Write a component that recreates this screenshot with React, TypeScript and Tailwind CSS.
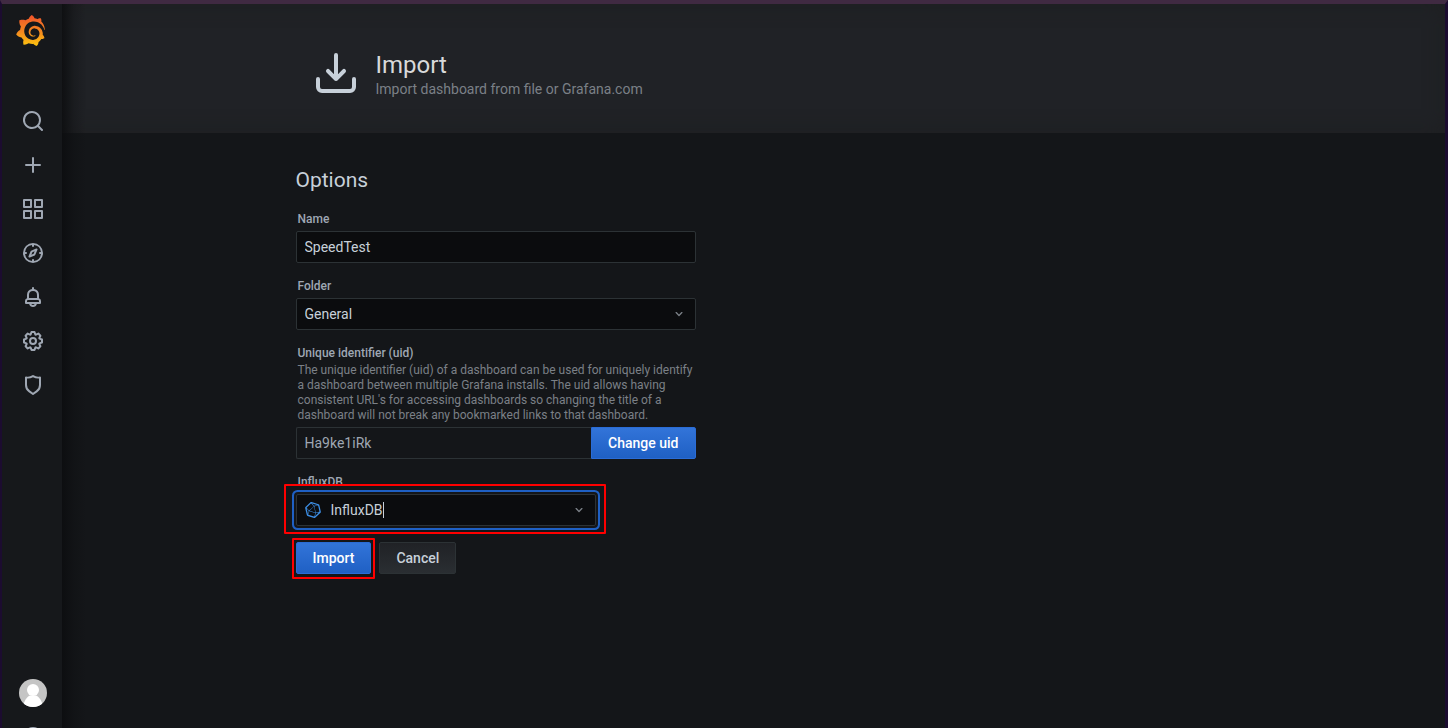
import React from "react";
import { SiGrafana, SiInfluxdb } from "react-icons/si";

const ICONS = {
  search:
    "M21.71,20.29,18,16.61A9,9,0,1,0,16.61,18l3.68,3.68a1,1,0,0,0,1.42,0A1,1,0,0,0,21.71,20.29ZM11,18a7,7,0,1,1,7-7A7,7,0,0,1,11,18Z",
  plus: "M19,11H13V5a1,1,0,0,0-2,0v6H5a1,1,0,0,0,0,2h6v6a1,1,0,0,0,2,0V13h6a1,1,0,0,0,0-2Z",
  apps: "M10,13H3a1,1,0,0,0-1,1v7a1,1,0,0,0,1,1h7a1,1,0,0,0,1-1V14A1,1,0,0,0,10,13ZM9,20H4V15H9ZM21,2H14a1,1,0,0,0-1,1v7a1,1,0,0,0,1,1h7a1,1,0,0,0,1-1V3A1,1,0,0,0,21,2ZM20,9H15V4h5Zm1,4H14a1,1,0,0,0-1,1v7a1,1,0,0,0,1,1h7a1,1,0,0,0,1-1V14A1,1,0,0,0,21,13Zm-1,7H15V15h5ZM10,2H3A1,1,0,0,0,2,3v7a1,1,0,0,0,1,1h7a1,1,0,0,0,1-1V3A1,1,0,0,0,10,2ZM9,9H4V4H9Z",
  compass:
    "M12,2A10,10,0,1,0,22,12,10,10,0,0,0,12,2Zm1,17.93V19a1,1,0,0,0-2,0v.93A8,8,0,0,1,4.07,13H5a1,1,0,0,0,0-2H4.07A8,8,0,0,1,11,4.07V5a1,1,0,0,0,2,0V4.07A8,8,0,0,1,19.93,11H19a1,1,0,0,0,0,2h.93A8,8,0,0,1,13,19.93ZM15.14,7.55l-5,2.12a1,1,0,0,0-.52.52l-2.12,5a1,1,0,0,0,.21,1.1,1,1,0,0,0,.7.29.93.93,0,0,0,.4-.08l5-2.12a1,1,0,0,0,.52-.52l2.12-5a1,1,0,0,0-1.31-1.31Zm-2.49,5.1-2.28,1,1-2.28,2.28-1Z",
  bell: "M18,13.18V10a6,6,0,0,0-5-5.91V3a1,1,0,0,0-2,0V4.09A6,6,0,0,0,6,10v3.18A3,3,0,0,0,4,16v2a1,1,0,0,0,1,1H8.14a4,4,0,0,0,7.72,0H19a1,1,0,0,0,1-1V16A3,3,0,0,0,18,13.18ZM8,10a4,4,0,0,1,8,0v3H8Zm4,10a2,2,0,0,1-1.72-1h3.44A2,2,0,0,1,12,20Zm6-3H6V16a1,1,0,0,1,1-1H17a1,1,0,0,1,1,1Z",
  cog: "M21.32,9.55l-1.89-.63.89-1.78A1,1,0,0,0,20.13,6L18,3.87a1,1,0,0,0-1.15-.19l-1.78.89-.63-1.89A1,1,0,0,0,13.5,2h-3a1,1,0,0,0-.95.68L8.92,4.57,7.14,3.68A1,1,0,0,0,6,3.87L3.87,6a1,1,0,0,0-.19,1.15l.89,1.78-1.89.63A1,1,0,0,0,2,10.5v3a1,1,0,0,0,.68.95l1.89.63-.89,1.78A1,1,0,0,0,3.87,18L6,20.13a1,1,0,0,0,1.15.19l1.78-.89.63,1.89a1,1,0,0,0,.95.68h3a1,1,0,0,0,.95-.68l.63-1.89,1.78.89A1,1,0,0,0,18,20.13L20.13,18a1,1,0,0,0,.19-1.15l-.89-1.78,1.89-.63A1,1,0,0,0,22,13.5v-3A1,1,0,0,0,21.32,9.55ZM20,12.78l-1.2.4A2,2,0,0,0,17.64,16l.57,1.14-1.1,1.1L16,17.64a2,2,0,0,0-2.79,1.16l-.4,1.2H11.22l-.4-1.2A2,2,0,0,0,8,17.64l-1.14.57-1.1-1.1L6.36,16A2,2,0,0,0,5.2,13.18L4,12.78V11.22l1.2-.4A2,2,0,0,0,6.36,8L5.79,6.89l1.1-1.1L8,6.36A2,2,0,0,0,10.82,5.2l.4-1.2h1.56l.4,1.2A2,2,0,0,0,16,6.36l1.14-.57,1.1,1.1L17.64,8a2,2,0,0,0,1.16,2.79l1.2.4ZM12,8a4,4,0,1,0,4,4A4,4,0,0,0,12,8Zm0,6a2,2,0,1,1,2-2A2,2,0,0,1,12,14Z",
  shield:
    "M19.63,3.65a1,1,0,0,0-.84-.2,8,8,0,0,1-6.22-1.27,1,1,0,0,0-1.14,0A8,8,0,0,1,5.21,3.45a1,1,0,0,0-.84.2A1,1,0,0,0,4,4.43v7.45a9,9,0,0,0,3.77,7.33l3.65,2.6a1,1,0,0,0,1.16,0l3.65-2.6A9,9,0,0,0,20,11.88V4.43A1,1,0,0,0,19.63,3.65ZM18,11.88a7,7,0,0,1-2.93,5.7L12,19.77,8.93,17.58A7,7,0,0,1,6,11.88V5.58a10,10,0,0,0,6-1.39,10,10,0,0,0,6,1.39Z",
  help: "M12,2A10,10,0,1,0,22,12,10,10,0,0,0,12,2Zm0,18a8,8,0,1,1,8-8A8,8,0,0,1,12,20Zm-1-4h2v2h-2Zm1-10a4,4,0,0,0-4,4h2a2,2,0,1,1,2,2,1,1,0,0,0-1,1v2h2V13.9A4,4,0,0,0,12,6Z",
  import:
    "M21,14a1,1,0,0,0-1,1v4a1,1,0,0,1-1,1H5a1,1,0,0,1-1-1V15a1,1,0,0,0-2,0v4a3,3,0,0,0,3,3H19a3,3,0,0,0,3-3V15A1,1,0,0,0,21,14Zm-9.71,1.71a1,1,0,0,0,.33.21.94.94,0,0,0,.76,0,1,1,0,0,0,.33-.21l4-4a1,1,0,0,0-1.42-1.42L13,12.59V3a1,1,0,0,0-2,0v9.59l-2.29-2.3a1,1,0,1,0-1.42,1.42Z",
  angleDown:
    "M17,9.17a1,1,0,0,0-1.41,0L12,12.71,8.46,9.17a1,1,0,0,0-1.41,0,1,1,0,0,0,0,1.42l4.24,4.24a1,1,0,0,0,1.42,0L17,10.59A1,1,0,0,0,17,9.17Z",
};

type IconName = keyof typeof ICONS;

function Icon({ name, className }: { name: IconName; className: string }) {
  return (
    <svg viewBox="0 0 24 24" fill="currentColor" aria-hidden="true" className={className}>
      <path d={ICONS[name]} />
    </svg>
  );
}

const NAV: { icon: IconName; label: string }[] = [
  { icon: "search", label: "Search" },
  { icon: "plus", label: "Create" },
  { icon: "apps", label: "Dashboards" },
  { icon: "compass", label: "Explore" },
  { icon: "bell", label: "Alerting" },
  { icon: "cog", label: "Configuration" },
  { icon: "shield", label: "Server Admin" },
];

function NavLink({ label, children }: { label: string; children: React.ReactNode }) {
  return (
    <a href="#" aria-label={label} className="flex h-11 w-full shrink-0 items-center justify-center text-[#9fa7b3]">
      {children}
    </a>
  );
}

function Sidebar() {
  return (
    <nav className="relative z-10 flex w-15 shrink-0 flex-col overflow-hidden bg-[#16181b]">
      <a href="#" aria-label="Home" className="flex h-[52px] shrink-0 items-center pl-[13px]">
        <svg width="0" height="0" className="absolute" aria-hidden="true">
          <defs>
            <linearGradient id="flame" x1="0" y1="1" x2="0" y2="0">
              <stop offset="0" stopColor="#fcc40f" />
              <stop offset="0.45" stopColor="#f58a1f" />
              <stop offset="1" stopColor="#f0532b" />
            </linearGradient>
          </defs>
        </svg>
        <SiGrafana size={31} stroke="none" fill="url(#flame)" />
      </a>
      <div className="mt-[43px] flex flex-1 flex-col pl-0.5">
        {NAV.map((item) => (
          <NavLink key={item.icon} label={item.label}>
            <Icon name={item.icon} className="size-6" />
          </NavLink>
        ))}
      </div>
      <div className="flex h-[57px] shrink-0 flex-col pl-0.5">
        <NavLink label="Profile">
          <svg viewBox="0 0 28 28" className="size-7 rounded-full" aria-hidden="true">
            <rect width="28" height="28" fill="#c5c5c5" />
            <circle cx="14" cy="11" r="6" fill="#fff" />
            <path d="M4.5 25.5C6 19.500 9.500 17 11 16.500h6c1.500.5 5 3 6.500 9L19 28H9Z" fill="#fff" />
          </svg>
        </NavLink>
        <NavLink label="Help">
          <Icon name="help" className="size-6" />
        </NavLink>
      </div>
    </nav>
  );
}

const labelClass = "mb-1 block pl-0.5 text-xs leading-[15px] font-medium text-[#9fa7b3]";
const controlClass = "h-8 rounded-xs border border-[#2c3235] bg-[#0b0c0e] text-sm text-[#c7d0d9] outline-none";
const primaryClass =
  "h-8 border border-[#2a6cd6] bg-linear-to-b from-[#3274d9] to-[#1f60c4] px-4 text-sm font-medium text-white";

function Highlight({ className }: { className: string }) {
  return <span aria-hidden="true" className={`pointer-events-none absolute z-10 rounded-[1px] border-2 border-[#ff0000] ${className}`} />;
}

function ImportForm() {
  return (
    <form className="w-full max-w-[400px]" onSubmit={(e) => e.preventDefault()}>
      <div className="mb-4">
        <label htmlFor="name" className={labelClass}>Name</label>
        <input id="name" type="text" defaultValue="SpeedTest" className={`${controlClass} block w-full px-2`} />
      </div>

      <div className="mb-4">
        <label htmlFor="folder" className={labelClass}>Folder</label>
        <div className={`${controlClass} flex items-center pr-2 pl-2`}>
          <select id="folder" className="flex-1 appearance-none bg-transparent outline-none">
            <option>General</option>
          </select>
          <Icon name="angleDown" className="size-4 text-[#7b8087]" />
        </div>
      </div>

      <div className="mb-4">
        <label htmlFor="uid" className="block pl-0.5 text-xs leading-[15px] font-medium text-[#9fa7b3]">
          Unique identifier (uid)
        </label>
        <p id="uid-help" className="mt-0.5 mb-1 pl-0.5 text-xs leading-[15px] text-[#7b8087]">
          The unique identifier (uid) of a dashboard can be used for uniquely identify a dashboard between multiple
          Grafana installs. The uid allows having consistent URL's for accessing dashboards so changing the title of a
          dashboard will not break any bookmarked links to that dashboard.
        </p>
        <div className="flex">
          <input
            id="uid"
            type="text"
            readOnly
            aria-describedby="uid-help"
            defaultValue="Ha9ke1iRk"
            className="h-8 min-w-0 flex-1 rounded-l-xs border border-r-0 border-[#2c3235] bg-transparent px-2 text-sm text-[#9fa7b3] outline-none"
          />
          <button type="button" className={`${primaryClass} rounded-r-xs`}>Change uid</button>
        </div>
      </div>

      <div className="mb-4">
        <label htmlFor="source" className={labelClass}>InfluxDB</label>
        <div className="relative w-3/4">
          <div
            className={`${controlClass} flex items-center px-2 shadow-[0_0_0_2px_#141619,0_0_0_4px_#1f60c4]`}
          >
            <SiInfluxdb size={16} className="mr-2.5 text-[#3d8fe6]" />
            <select id="source" className="appearance-none bg-transparent outline-none [field-sizing:content]">
              <option>InfluxDB</option>
            </select>
            <span aria-hidden="true" className="h-4 w-px bg-[#c7d0d9]" />
            <Icon name="angleDown" className="ml-auto size-4 text-[#7b8087]" />
          </div>
          <Highlight className="-top-2.5 -right-2.5 -bottom-2 -left-3" />
        </div>
      </div>

      <div className="flex gap-2">
        <div className="relative">
          <button type="submit" className={`${primaryClass} rounded-xs`}>Import</button>
          <Highlight className="-inset-x-1 -top-1 -bottom-[5px]" />
        </div>
        <button
          type="button"
          className="h-8 rounded-xs border border-[#2c3235] bg-linear-to-b from-[#202226] to-[#2a2e32] px-4 text-sm font-medium text-[#c7d0d9]"
        >
          Cancel
        </button>
      </div>
    </form>
  );
}

export default function App() {
  return (
    <div className="flex min-h-screen border-t-4 border-r-3 border-l-2 border-t-[#402a42] border-r-[#1c0c30] border-l-[#1c0c30] bg-[#141619] font-[Roboto,sans-serif]">
      <Sidebar />
      <div className="relative min-w-0 flex-1">
        <header className="bg-[#202226] shadow-[inset_0_0_20px_#1e1f21]">
          <div className="mx-auto flex h-[129px] max-w-[980px] items-start px-12 pt-[45px]">
            <Icon name="import" className="mr-4 size-12 shrink-0 text-[#c7d0d9]" />
            <div>
              <h1 className="text-2xl leading-8 text-[#d8d9da]">Import</h1>
              <p className="text-sm leading-4 text-[#7b8087]">Import dashboard from file or Grafana.com</p>
            </div>
          </div>
        </header>
        <main className="mx-auto max-w-[980px] px-8 pt-8 pb-8">
          <h2 className="mb-[17px] text-[21px] leading-[30px] text-[#c7d0d9]">Options</h2>
          <ImportForm />
        </main>
        <div
          aria-hidden="true"
          className="pointer-events-none absolute inset-y-0 left-0 w-6 bg-linear-to-r from-[#0b0c0e]/80 via-[#0b0c0e]/25 to-transparent"
        />
      </div>
    </div>
  );
}
